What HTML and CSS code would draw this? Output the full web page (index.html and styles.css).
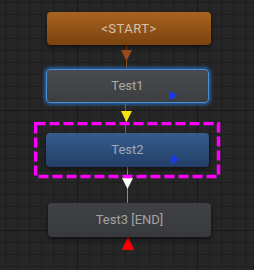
FILE: index.html
```html
<!DOCTYPE html>
<html>

<head>
    <title>State Graph</title>
    <link rel="stylesheet" href="styles.css">
</head>

<body>
    <div class="graph">
        <!-- Connections between nodes -->
        <div class="wire wire-start"></div>
        <div class="arrow arrow-down arrow-start"></div>

        <div class="wire wire-test1"></div>
        <div class="arrow arrow-down arrow-test1"></div>

        <div class="wire wire-test2"></div>
        <div class="arrow arrow-down arrow-test2"></div>

        <div class="arrow arrow-up arrow-end"></div>

        <!-- Nodes -->
        <div class="node node-start">&lt;START&gt;</div>

        <div class="node node-test node-test1 is-selected">
            Test1
            <svg class="flag" width="8" height="9" viewBox="0 0 8 9">
                <path d="M0 0 L3 1 L8 4.5 L3 8 L0 9 Z" fill="#1a3af0"></path>
            </svg>
        </div>

        <div class="node node-test node-test2 is-active">
            Test2
            <svg class="flag" width="8" height="9" viewBox="0 0 8 9">
                <path d="M0 0 L3 1 L8 4.5 L3 8 L0 9 Z" fill="#1a3af0"></path>
            </svg>
        </div>

        <div class="node node-test node-test3">Test3 [END]</div>

        <!-- Highlight around the running node -->
        <svg class="highlight" width="187" height="57" viewBox="0 0 187 57">
            <rect x="1.5" y="1.5" width="183" height="53" fill="none" stroke="#ff00ff" stroke-width="3.5" stroke-dasharray="10 4"></rect>
        </svg>
    </div>
</body>

</html>
```

FILE: styles.css
```css
/* Graph canvas */
body {
    margin: 0;
    font-family: Roboto, "Liberation Sans", sans-serif;
    overflow: hidden;
}
.graph {
    position: relative;
    width: 254px;
    height: 270px;
    background-color: #262626;
    background-image:
        linear-gradient(#181818 1px, transparent 1px),
        linear-gradient(90deg, #181818 1px, transparent 1px),
        linear-gradient(#1e1e1e 1px, transparent 1px),
        linear-gradient(90deg, #1e1e1e 1px, transparent 1px);
    background-size: 120px 120px, 120px 120px, 12px 12px, 12px 12px;
    background-position: 77px 110px, 77px 110px, 5px 2px, 5px 2px;
}

/* Nodes */
.node {
    position: absolute;
    display: flex;
    align-items: center;
    justify-content: center;
    font-size: 13px;
    border-radius: 4px;
    box-shadow: 0 2px 5px rgba(0, 0, 0, 0.6);
    box-sizing: border-box;
    padding-bottom: 1px;
}
.node-start {
    left: 47px;
    top: 12px;
    width: 164px;
    height: 33px;
    color: #d2c2ae;
    letter-spacing: 0.5px;
    background: linear-gradient(#a9631f, #7a430f);
}
.node-test {
    width: 163px;
    height: 34px;
    color: #ababab;
    background: linear-gradient(#4a4b4e, #3d3e41);
}
.node-test1 {
    left: 46px;
    top: 69px;
}
.node-test1.is-selected {
    border: 1px solid #4a90d8;
    box-shadow: 0 0 3px 2px rgba(40, 115, 200, 0.7);
}
.node-test2 {
    left: 46px;
    top: 133px;
}
.node-test2.is-active {
    color: #9ea9ba;
    background: linear-gradient(#365c8d, #233f68);
}
.node-test3 {
    left: 48px;
    top: 203px;
    color: #a4a4a4;
    background: linear-gradient(#404144, #38393c);
}

/* Small run flag on a node */
.flag {
    position: absolute;
    right: 31px;
    bottom: 2px;
}
.node-test2 .flag {
    right: 30px;
    bottom: 3px;
}

/* Wires */
.wire {
    position: absolute;
    width: 1px;
}
.wire-start {
    left: 126px;
    top: 45px;
    height: 24px;
    background: #8a4a18;
}
.wire-test1 {
    left: 125px;
    top: 103px;
    height: 30px;
    background: #756a34;
}
.wire-test2 {
    left: 127px;
    top: 167px;
    height: 36px;
    background: #8c8c8c;
}

/* Arrow heads */
.arrow {
    position: absolute;
    width: 11px;
    height: 11px;
}
.arrow-down {
    clip-path: polygon(0 0, 100% 0, 50% 100%);
}
.arrow-up {
    clip-path: polygon(50% 0, 100% 100%, 0 100%);
}
.arrow-start {
    left: 121px;
    top: 50px;
    background: #9a4c1c;
}
.arrow-test1 {
    left: 121px;
    top: 111px;
    background: #f5e312;
}
.arrow-test2 {
    left: 122px;
    top: 178px;
    background: #ffffff;
}
.arrow-end {
    left: 122px;
    top: 236px;
    width: 12px;
    height: 14px;
    background: #ff0000;
}

/* Dashed highlight */
.highlight {
    position: absolute;
    left: 34px;
    top: 122px;
}
```
